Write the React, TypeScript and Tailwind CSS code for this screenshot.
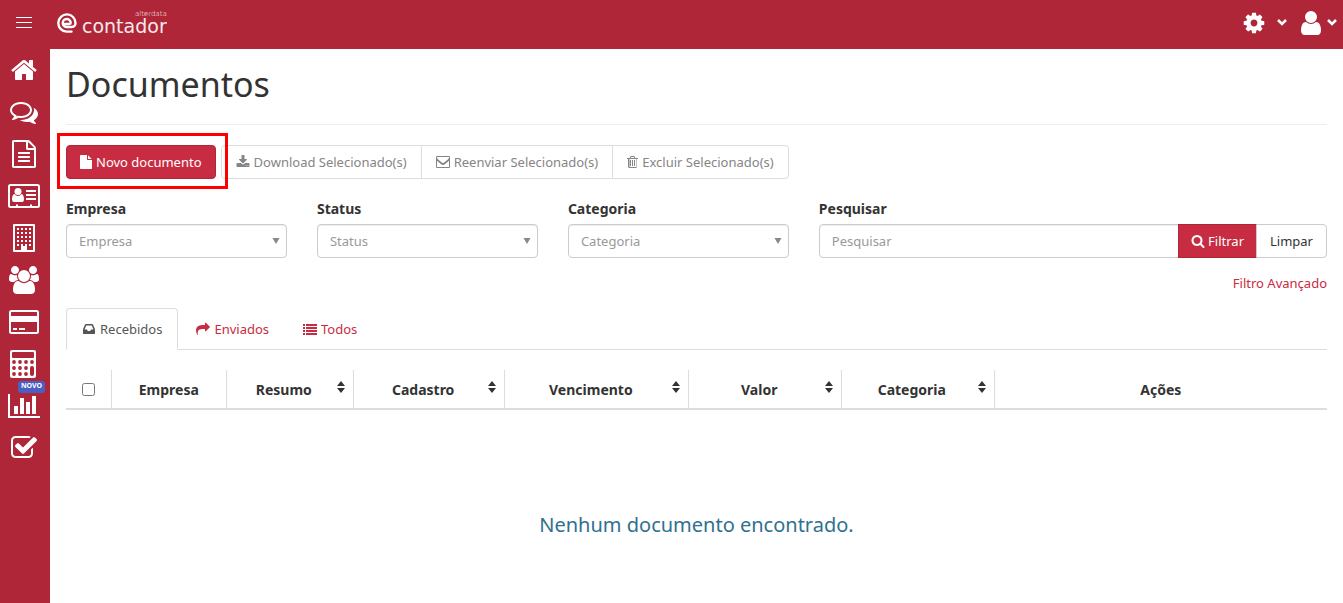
import { useState, type ReactNode } from 'react';
import clsx from 'clsx';

type IconProps = { d: string; className?: string; viewBox?: string };

function Icon({ d, className = 'size-[14px]', viewBox = '0 0 1792 1792' }: IconProps) {
  return (
    <svg viewBox={viewBox} className={clsx('shrink-0 fill-current', className)} fillRule="evenodd" aria-hidden="true">
      <path d={d} />
    </svg>
  );
}

const paths = {
  home: 'M1472 992v480q0 26-19 45t-45 19h-384v-384h-256v384h-384q-26 0-45-19t-19-45v-480q0-1 .5-3t.5-3l575-474 575 474q1 2 1 6zm223-69l-62 74q-8 9-21 11h-3q-13 0-21-7l-692-577-692 577q-12 8-24 7-13-2-21-11l-62-74q-8-10-7-23.500t11-21.500l719-599q32-26 76-26t76 26l244 204v-195q0-14 9-23t23-9h192q14 0 23 9t9 23v408l219 182q10 8 11 21.500t-7 23.500z',
  comments:
    'M704 384q-153 0-286 52t-211.500 141-78.500 191q0 82 53 158t149 132l97 56-35 84q34-20 62-39l44-31 53 10q78 14 153 14 153 0 286-52t211.500-141 78.500-191-78.500-191-211.500-141-286-52zm0-128q191 0 353.500 68.500t256.500 186.500 94 257-94 257-256.500 186.500-353.500 68.500q-86 0-176-16-124 88-278 128-36 9-86 16h-3q-11 0-20.500-8t-11.500-21q-1-3-1-6.500t.5-6.500 2-6l2.500-5 3.500-5.500 4-5 4.500-5 4-4.500q5-6 23-25t26-29.500 22.500-29 25-38.500 20.500-44q-124-72-195-177t-71-224q0-139 94-257t256.500-186.500 353.500-68.500zm822 1169q10 24 20.500 44t25 38.500 22.500 29 26 29.500 23 25q1 1 4 4.500t4.500 5 4 5 3.500 5.500l2.500 5 2 6 .5 6.500-1 6.500q-3 14-13 22t-22 7q-50-7-86-16-154-40-278-128-90 16-176 16-271 0-472-132 58 4 88 4 161 0 309-45t264-129q125-92 192-212t67-254q0-77-23-152 129 71 204 178t75 230q0 120-71 224.500t-195 176.500z',
  fileText:
    'M1596 380q28 28 48 76t20 88v1152q0 40-28 68t-68 28h-1344q-40 0-68-28t-28-68v-1600q0-40 28-68t68-28h896q40 0 88 20t76 48zm-444-244v376h376q-10-29-22-41l-313-313q-12-12-41-22zm384 1528v-1024h-416q-40 0-68-28t-28-68v-416h-768v1536h1280zm-1024-864q0-14 9-23t23-9h704q14 0 23 9t9 23v64q0 14-9 23t-23 9h-704q-14 0-23-9t-9-23v-64zm736 224q14 0 23 9t9 23v64q0 14-9 23t-23 9h-704q-14 0-23-9t-9-23v-64q0-14 9-23t23-9h704zm0 256q14 0 23 9t9 23v64q0 14-9 23t-23 9h-704q-14 0-23-9t-9-23v-64q0-14 9-23t23-9h704z',
  users:
    'M657 896q-162 5-265 128h-134q-82 0-138-40.500t-56-118.500q0-353 124-353 6 0 43.500 21t97.500 42.500 119 21.500q67 0 133-23-5 37-5 66 0 159 81 256zm1071 637q0 120-73 189.500t-194 69.500h-874q-121 0-194-69.500t-73-189.500q0-53 3.500-103.500t14-109 26.500-108.500 43-97.500 62-81 85.500-53.500 111.500-20q10 0 43 21.500t73 48 107 48 135 21.500 135-21.500 107-48 73-48 43-21.500q61 0 111.500 20t85.500 53.500 62 81 43 97.500 26.500 108.500 14 109 3.500 103.500zm-1024-1277q0 106-75 181t-181 75-181-75-75-181 75-181 181-75 181 75 75 181zm704 384q0 159-112.500 271.500t-271.500 112.500-271.500-112.500-112.500-271.500 112.500-271.500 271.500-112.500 271.500 112.500 112.500 271.500zm576 225q0 78-56 118.500t-138 40.500h-134q-103-123-265-128 81-97 81-256 0-29-5-66 66 23 133 23 59 0 119-21.500t97.500-42.500 43.500-21q124 0 124 353zm-128-609q0 106-75 181t-181 75-181-75-75-181 75-181 181-75 181 75 75 181z',
  check:
    'M1472 930v318q0 119-84.500 203.500t-203.500 84.500h-832q-119 0-203.500-84.500t-84.500-203.500v-832q0-119 84.500-203.500t203.500-84.500h832q63 0 117 25 15 7 18 23 3 17-9 29l-49 49q-10 10-23 10-3 0-9-2-23-6-45-6h-832q-66 0-113 47t-47 113v832q0 66 47 113t113 47h832q66 0 113-47t47-113v-254q0-13 9-22l64-64q10-10 23-10 6 0 12 3 20 8 20 29zm231-489l-814 814q-24 24-57 24t-57-24l-430-430q-24-24-24-57t24-57l110-110q24-24 57-24t57 24l263 263 647-647q24-24 57-24t57 24l110 110q24 24 24 57t-24 57z',
  cog: 'M1152 896q0-106-75-181t-181-75-181 75-75 181 75 181 181 75 181-75 75-181zm512-109v222q0 12-8 23t-20 13l-185 28q-19 54-39 91 35 50 107 138 10 12 10 25t-9 23q-27 37-99 108t-94 71q-12 0-26-9l-138-108q-44 23-91 38-16 136-29 186-7 28-36 28h-222q-14 0-24.500-8.500t-11.500-21.500l-28-184q-49-16-90-37l-141 107q-10 9-25 9-14 0-25-11-126-114-165-168-7-10-7-23 0-12 8-23 15-21 51-66.500t54-70.500q-27-50-41-99l-183-27q-13-2-21-12.500t-8-23.500v-222q0-12 8-23t19-13l186-28q14-46 39-92-40-57-107-138-10-12-10-24 0-10 9-23 26-36 98.500-107.500t94.500-71.500q13 0 26 10l138 107q44-23 91-38 16-136 29-186 7-28 36-28h222q14 0 24.500 8.500t11.500 21.500l28 184q49 16 90 37l142-107q9-9 24-9 13 0 25 10 129 119 165 170 7 8 7 22 0 12-8 23-15 21-51 66.500t-54 70.500q26 50 41 98l183 28q13 2 21 12.500t8 23.500z',
  user: 'M1536 1399q0 109-62.500 187t-150.500 78h-854q-88 0-150.500-78t-62.500-187q0-85 8.500-160.500t31.500-152 58.500-131 94-89 134.500-34.500q131 128 313 128t313-128q76 0 134.500 34.500t94 89 58.500 131 31.500 152 8.500 160.500zm-256-887q0 159-112.500 271.500t-271.500 112.500-271.500-112.500-112.500-271.500 112.500-271.500 271.500-112.500 271.500 112.500 112.500 271.500z',
  file: 'M1152 512v-472q22 14 36 28l408 408q14 14 28 36h-472zm-128 32q0 40 28 68t68 28h544v1056q0 40-28 68t-68 28h-1344q-40 0-68-28t-28-68v-1600q0-40 28-68t68-28h800v544z',
  download:
    'M1344 1344q0-26-19-45t-45-19-45 19-19 45 19 45 45 19 45-19 19-45zm256 0q0-26-19-45t-45-19-45 19-19 45 19 45 45 19 45-19 19-45zm128-224v320q0 40-28 68t-68 28h-1472q-40 0-68-28t-28-68v-320q0-40 28-68t68-28h465l135 136q58 56 136 56t136-56l136-136h464q40 0 68 28t28 68zm-325-569q17 41-14 70l-448 448q-18 19-45 19t-45-19l-448-448q-31-29-14-70 17-39 59-39h256v-448q0-26 19-45t45-19h256q26 0 45 19t19 45v448h256q42 0 59 39z',
  trash:
    'M704 1376v-704q0-14-9-23t-23-9h-64q-14 0-23 9t-9 23v704q0 14 9 23t23 9h64q14 0 23-9t9-23zm256 0v-704q0-14-9-23t-23-9h-64q-14 0-23 9t-9 23v704q0 14 9 23t23 9h64q14 0 23-9t9-23zm256 0v-704q0-14-9-23t-23-9h-64q-14 0-23 9t-9 23v704q0 14 9 23t23 9h64q14 0 23-9t9-23zM512 512v948q0 22 7 40.500t14.500 27 10.500 8.500h832q3 0 10.500-8.500t14.500-27 7-40.500v-948h-896zm160-128h448l-48-117q-7-9-17-11h-317q-10 2-17 11zm928 32v64q0 14-9 23t-23 9h-96v948q0 83-47 143.500t-113 60.500h-832q-66 0-113-58.500t-47-141.500v-952h-96q-14 0-23-9t-9-23v-64q0-14 9-23t23-9h309l70-167q15-37 54-63t79-26h320q40 0 79 26t54 63l70 167h309q14 0 23 9t9 23z',
  envelope:
    'M1664 1504v-768q-32 36-69 66-268 206-426 338-51 43-83 67t-86.500 48.500-102.500 24.500h-2q-48 0-102.500-24.500t-86.500-48.500-83-67q-158-132-426-338-37-30-69-66v768q0 13 9.500 22.500t22.500 9.500h1472q13 0 22.500-9.500t9.500-22.500zM160 256q-13 0-22.500 9.500t-9.500 22.500q0 168 147 284 193 152 401 317 6 5 35 29.500t46 37.500 44.500 31.500 50.500 27.500 43 9h2q20 0 43-9t50.500-27.500 44.500-31.500 46-37.500 35-29.500q208-165 401-317 54-43 100.500-115.500t46.500-131.500v-37q0-32-32-32zM1792 288v1216q0 66-47 113t-113 47h-1472q-66 0-113-47t-47-113v-1216q0-66 47-113t113-47h1472q66 0 113 47t47 113z',
  search:
    'M1216 832q0-185-131.500-316.500t-316.500-131.500-316.500 131.500-131.500 316.500 131.500 316.500 316.500 131.500 316.500-131.500 131.500-316.500zm512 832q0 52-38 90t-90 38q-54 0-90-38l-343-342q-179 124-399 124-143 0-273.500-55.500t-225-150-150-225-55.500-273.500 55.500-273.500 150-225 225-150 273.500-55.500 273.500 55.500 225 150 150 225 55.500 273.500q0 220-124 399l343 343q37 37 37 90z',
  inbox:
    'M1151 960h316q-1-3-2.500-8.500t-2.500-7.500l-212-496h-708l-212 496q-1 3-2.500 8.500t-2.500 7.500h316l95 192h320zm513 30v482q0 26-19 45t-45 19h-1408q-26 0-45-19t-19-45v-482q0-62 25-123l238-552q10-25 36.500-42t52.500-17h832q26 0 52.500 17t36.500 42l238 552q25 61 25 123z',
  share:
    'M1792 640q0 26-19 45l-512 512q-19 19-45 19t-45-19-19-45v-256h-224q-98 0-175.500 6t-154 21.500-133 42.500-105.500 69.500-80 101-48.500 138.500-17.500 181q0 55 5 123 0 6 2.500 23.500t2.500 26.500q0 15-8.500 25t-23.500 10q-16 0-28-17-7-9-13-22t-13.500-30-10.500-24q-127-285-127-451 0-199 53-333 162-403 875-403h224v-256q0-26 19-45t45-19 45 19l512 512q19 19 19 45z',
  list: 'M0 256h256v256H0zM384 256h1408v256H384zM0 640h256v256H0zM384 640h1408v256H384zM0 1024h256v256H0zM384 1024h1408v256H384zM0 1408h256v256H0zM384 1408h1408v256H384z',
};

const dots = [0, 1, 2, 3];

const menu: { label: string; icon: ReactNode; badge?: string }[] = [
  { label: 'Início', icon: <Icon d={paths.home} className="size-7" /> },
  { label: 'Mensagens', icon: <Icon d={paths.comments} className="size-7" /> },
  { label: 'Documentos', icon: <Icon d={paths.fileText} className="size-7" /> },
  {
    label: 'Contatos',
    icon: (
      <svg viewBox="0 0 32 28" className="h-7 w-8 shrink-0 fill-current" aria-hidden="true">
        <path
          fillRule="evenodd"
          d="M2.500 2h27A2.500 2.500 0 0 1 32 4.500v19a2.500 2.500 0 0 1-2.500 2.500h-27A2.500 2.500 0 0 1 0 23.500v-19A2.500 2.500 0 0 1 2.500 2zM2 5v18.500q0 .5.500.5H8v-1.500h2V24h12v-1.500h2V24h5.500q.5 0 .5-.5V5q0-1-.5-1h-27Q2 4 2 5z"
        />
        <circle cx="10" cy="9.500" r="3.500" />
        <path d="M6.500 12q1.500 2 3.500 2t3.500-2q2.500.5 2.500 5.500 0 2.500-2 2.500H6q-2 0-2-2.500Q4 12.500 6.500 12z" />
        <path d="M18 8h10v2H18zM18 12h10v2H18zM18 16h10v2H18z" />
      </svg>
    ),
  },
  {
    label: 'Empresas',
    icon: (
      <svg viewBox="0 0 22 28" className="h-7 w-[22px] shrink-0" aria-hidden="true">
        <rect width="22" height="28" rx="1" className="fill-current" />
        <rect x="2" y="2" width="18" height="24" className="fill-[#ae2638]" />
        <g className="fill-current">
          {[4, 8, 12, 16, 20].map((y) =>
            dots.map((c) => <rect key={`${y}-${c}`} x={4 + c * 4} y={y} width="2" height="2" />),
          )}
          <rect x="8" y="22" width="6" height="5" />
        </g>
      </svg>
    ),
  },
  { label: 'Usuários', icon: <Icon d={paths.users} viewBox="64 0 1920 1792" className="h-7 w-[30px]" /> },
  {
    label: 'Pagamentos',
    icon: (
      <svg viewBox="0 0 30 28" className="h-7 w-[30px] shrink-0 fill-current" aria-hidden="true">
        <path
          fillRule="evenodd"
          d="M2.500 2h25A2.500 2.500 0 0 1 30 4.500v19a2.500 2.500 0 0 1-2.500 2.500h-25A2.500 2.500 0 0 1 0 23.500v-19A2.500 2.500 0 0 1 2.500 2zM2 4.500V8h26V4.500q0-.5-.5-.5h-25Q2 4 2 4.500zM2 14v9.500q0 .5.500.5h25q.5 0 .5-.5V14zM4 20h4v2H4zM10 20h6v2h-6z"
        />
      </svg>
    ),
  },
  {
    label: 'Cálculos',
    icon: (
      <svg viewBox="0 0 28 28" className="size-7 shrink-0" aria-hidden="true">
        <rect width="26" height="28" rx="2" className="fill-current" />
        <g className="fill-[#ae2638]">
          <rect x="2" y="2" width="22" height="6" rx="1" />
          {[12, 18, 24].map((cy) =>
            dots.map((c) => (c < 3 || cy === 12 ? <circle key={`${cy}-${c}`} cx={4 + c * 6} cy={cy} r="1.900" /> : null)),
          )}
          <rect x="20" y="16" width="4" height="10" rx="2" />
        </g>
      </svg>
    ),
  },
  {
    label: 'Relatórios',
    badge: 'NOVO',
    icon: (
      <svg viewBox="0 0 32 28" className="h-7 w-8 shrink-0 fill-current" aria-hidden="true">
        <path d="M0 2h2v22h30v2H0zM6 14h4v8H6zM12 6h4v16h-4zM18 10h4v12h-4zM24 4h4v18h-4z" />
      </svg>
    ),
  },
  { label: 'Tarefas', icon: <Icon d={paths.check} className="size-7" /> },
];

function Chevron() {
  return (
    <svg viewBox="0 0 10 7" className="h-[7px] w-[10px] fill-none stroke-current stroke-[2.500]" aria-hidden="true">
      <path d="M1 1l4 4 4-4" />
    </svg>
  );
}

function Header() {
  return (
    <header className="flex h-[49px] items-center bg-[#ae2638] pr-1.5 pb-1 text-white">
      <button type="button" aria-label="Menu" className="ml-4 flex w-4 flex-col gap-1">
        <span className="h-px w-full bg-white" />
        <span className="h-px w-full bg-white" />
        <span className="h-px w-full bg-white" />
      </button>
      <a href="#inicio" className="ml-[25px] flex items-center gap-[5px]" aria-label="e-contador alterdata">
        <svg viewBox="0 0 20 20" className="size-5 fill-none stroke-current" aria-hidden="true">
          <path
            d="M14.500 18.600H9.500A8.600 8.600 0 1 1 18.500 10c0 2.600-1.500 4-3.800 4H9.500a4 4 0 1 1 4.200-4.200c0 .8-.5 1.200-1.200 1.200H7.500"
            strokeWidth="2.400"
            strokeLinecap="round"
          />
        </svg>
        <span className="flex flex-col pb-0.5 text-right font-['DejaVu_Sans']">
          <span className="text-[7px] leading-[8px] font-extralight">alterdata</span>
          <span className="text-[19px] leading-4 opacity-90">contador</span>
        </span>
      </a>
      <div className="ml-auto flex items-center">
        <button type="button" aria-label="Configurações" className="flex items-center gap-[11px]">
          <Icon d={paths.cog} className="size-6" />
          <Chevron />
        </button>
        <button type="button" aria-label="Conta" className="ml-[10px] flex items-center gap-0.5">
          <Icon d={paths.user} className="size-7" />
          <Chevron />
        </button>
      </div>
    </header>
  );
}

function Sidebar() {
  return (
    <nav className="w-[50px] shrink-0 bg-[#ae2638] text-white" aria-label="Principal">
      {menu.map((item) => (
        <a key={item.label} href="#menu" aria-label={item.label} className="relative flex h-[42px] w-12 items-center justify-center">
          {item.icon}
          {item.badge && (
            <span className="absolute -top-1 left-[18px] h-3 w-[27px] rounded-[3px] bg-[#4a5fc4] text-center text-[7px] leading-[10px] font-bold">
              {item.badge}
            </span>
          )}
        </a>
      ))}
    </nav>
  );
}

function SelectField({ id, label }: { id: string; label: string }) {
  return (
    <div>
      <label htmlFor={id} className="mb-[5px] block text-[14px] font-bold">
        {label}
      </label>
      <div className="relative">
        <select
          id={id}
          className="block h-[34px] w-full appearance-none rounded border border-[#ccc] bg-white px-3 text-[#999] shadow-[inset_0_1px_1px_rgba(0,0,0,0.075)]"
        >
          <option>{label}</option>
        </select>
        <svg viewBox="0 0 8 6" className="pointer-events-none absolute top-[14px] right-[7px] h-1.5 w-2 fill-[#888]" aria-hidden="true">
          <path d="M0.500 0h7L4 6z" />
        </svg>
      </div>
    </div>
  );
}

const actions = [
  { label: 'Download Selecionado(s)', icon: paths.download },
  { label: 'Reenviar Selecionado(s)', icon: paths.envelope },
  { label: 'Excluir Selecionado(s)', icon: paths.trash, narrow: true },
];

const tabs = [
  { label: 'Recebidos', icon: paths.inbox },
  { label: 'Enviados', icon: paths.share },
  { label: 'Todos', icon: paths.list },
];

const columns = [
  { label: 'Empresa', width: 'w-[9.1%]', sortable: false },
  { label: 'Resumo', width: 'w-[10.1%]', sortable: true },
  { label: 'Cadastro', width: 'w-[12%]', sortable: true },
  { label: 'Vencimento', width: 'w-[14.6%]', sortable: true },
  { label: 'Valor', width: 'w-[12.1%]', sortable: true },
  { label: 'Categoria', width: 'w-[12.1%]', sortable: true },
  { label: 'Ações', width: '', sortable: false },
];

export default function App() {
  const [tab, setTab] = useState('Recebidos');

  return (
    <div className="flex min-h-screen flex-col bg-white font-['Noto_Sans',sans-serif] text-[13px] leading-5 text-[#333]">
      <Header />
      <div className="flex flex-1">
        <Sidebar />
        <main className="min-w-0 flex-1 px-4">
          <h1 className="mt-4 border-b border-[#eee] pb-5 text-[34px] leading-[39px]">Documentos</h1>

          <div className="mt-5 flex">
            <div className="relative z-10 mr-[5px]">
              <button
                type="button"
                className="flex h-[34px] items-center gap-1 rounded border border-[#ae2638] bg-[#c82c42] px-[13px] whitespace-nowrap text-white"
              >
                <Icon d={paths.file} viewBox="128 0 1536 1792" className="h-[14px] w-3" />
                Novo documento
              </button>
              <span className="pointer-events-none absolute -top-3 -right-3 -bottom-2.5 -left-[9px] border-3 border-[#f00]" />
            </div>
            <div className="flex">
              {actions.map((a) => (
                <button
                  key={a.label}
                  type="button"
                  className="-ml-px flex h-[34px] items-center gap-1 border border-[#ddd] px-[14px] whitespace-nowrap text-[#858585] first:ml-0 first:rounded-l last:rounded-r"
                >
                  {a.narrow ? <Icon d={a.icon} viewBox="192 0 1408 1792" className="h-[14px] w-[11px]" /> : <Icon d={a.icon} />}
                  {a.label}
                </button>
              ))}
            </div>
          </div>

          <form className="mt-5 grid grid-cols-[10fr_10fr_10fr_23fr] gap-[30px]">
            <SelectField id="empresa" label="Empresa" />
            <SelectField id="status" label="Status" />
            <SelectField id="categoria" label="Categoria" />
            <div>
              <label htmlFor="pesquisar" className="mb-[5px] block text-[14px] font-bold">
                Pesquisar
              </label>
              <div className="flex">
                <input
                  id="pesquisar"
                  type="text"
                  placeholder="Pesquisar"
                  className="h-[34px] min-w-0 flex-1 rounded-l border border-[#ccc] px-3 shadow-[inset_0_1px_1px_rgba(0,0,0,0.075)] placeholder:text-[#999]"
                />
                <button type="button" className="-ml-px flex h-[34px] items-center gap-[3px] border border-[#ae2638] bg-[#c82c42] px-3 text-white">
                  <Icon d={paths.search} />
                  Filtrar
                </button>
                <button type="button" className="-ml-px h-[34px] rounded-r border border-[#ccc] px-[13px]">
                  Limpar
                </button>
              </div>
            </div>
          </form>

          <div className="mt-[15px] text-right">
            <a href="#filtro" className="text-[#c82c42]">
              Filtro Avançado
            </a>
          </div>

          <div className="mt-[15px] flex gap-0.5 border-b border-[#ddd]" role="tablist">
            {tabs.map((t) => (
              <button
                key={t.label}
                type="button"
                role="tab"
                aria-selected={tab === t.label}
                onClick={() => setTab(t.label)}
                className={clsx(
                  '-mb-px flex h-[42px] items-center gap-1 rounded-t border px-[15px]',
                  tab === t.label ? 'border-[#ddd] border-b-white text-[#555]' : 'border-transparent text-[#c82c42]',
                )}
              >
                <Icon d={t.icon} />
                {t.label}
              </button>
            ))}
          </div>

          <table className="mt-5 w-full table-fixed border-collapse text-[14px]">
            <thead>
              <tr className="h-[39px] border-b-2 border-[#ddd]">
                <th className="w-[3.6%] border-r border-[#ddd] text-center">
                  <input type="checkbox" aria-label="Selecionar todos" className="mx-auto block size-[13px]" />
                </th>
                {columns.map((c) => (
                  <th
                    key={c.label}
                    scope="col"
                    className={clsx('relative border-r border-[#ddd] pt-0.5 text-center last:border-r-0', c.width, c.sortable && 'pr-3')}
                  >
                    {c.label}
                    {c.sortable && (
                      <svg viewBox="0 0 8 12" className="absolute top-[11px] right-2 h-3 w-2 fill-[#333]" aria-hidden="true">
                        <path d="M4 0l4 5H0zM0 7h8l-4 5z" />
                      </svg>
                    )}
                  </th>
                ))}
              </tr>
            </thead>
          </table>

          <p className="mt-[100px] text-center text-[20px] leading-[30px] text-[#31708f]">Nenhum documento encontrado.</p>
        </main>
      </div>
    </div>
  );
}
